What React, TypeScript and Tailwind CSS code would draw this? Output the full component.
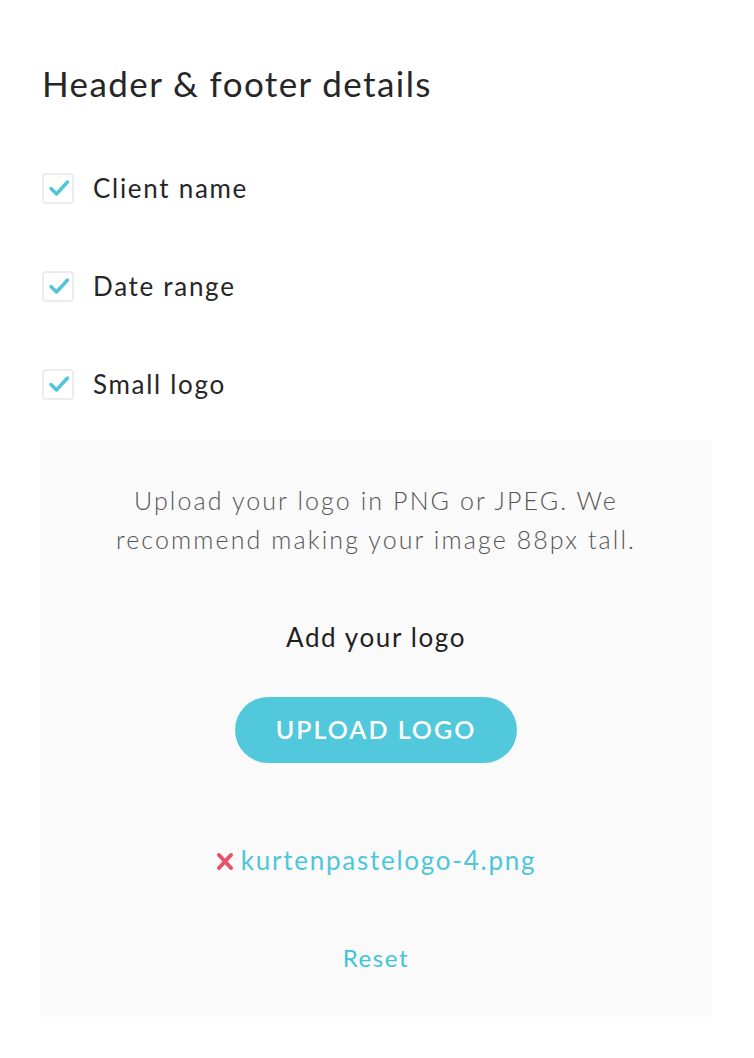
const rows = ["Client name", "Date range", "Small logo"];

function CheckRow({ label }: { label: string }) {
  return (
    <div className="flex items-center h-[32px] gap-[19px]">
      <div className="w-[32px] h-[31px] flex items-center justify-center rounded-[4px] border-2 border-[#ececec] bg-white">
        <svg width="22" height="18" viewBox="0 0 22 18" className="ml-[1px]">
          <path d="M3 9.5 L8.5 15 L19.5 3" fill="none" stroke="#4ec6da" strokeWidth="3.4" strokeLinecap="round" strokeLinejoin="round" />
        </svg>
      </div>
      <span className="text-[26px] tracking-[1.7px] text-[#262626]">{label}</span>
    </div>
  );
}

export default function App() {
  return (
    <div className="min-h-[1058px] bg-white px-[40px] pt-[61px] font-['Lato',sans-serif]">
      <h2 className="text-[35px] leading-[44px] tracking-[1.4px] text-[#262626] pl-[2px]">Header &amp; footer details</h2>

      <div className="mt-[67px] flex flex-col gap-[66px] pl-[2px]">
        {rows.map((r) => (
          <CheckRow key={r} label={r} />
        ))}
      </div>

      <div className="mt-[41px] w-[672px] bg-[#fafafa] flex flex-col items-center pt-[40px] pb-[40px]">
        <p className="text-[25px] font-light leading-[39px] tracking-[2.1px] text-[#555555] text-center">
          Upload your logo in PNG or JPEG. We
          <br />
          recommend making your image 88px tall.
        </p>

        <p className="mt-[59px] text-[26px] leading-[39px] tracking-[1.6px] text-[#1f1f1f]">Add your logo</p>

        <button className="mt-[40px] w-[282px] h-[66px] rounded-full bg-[#52c8dc] text-white text-[25px] font-semibold tracking-[2px]">
          UPLOAD LOGO
        </button>

        <div className="mt-[78px] flex items-center gap-[7px] h-[39px]">
          <svg width="18" height="19" viewBox="0 0 18 19" className="mt-[1px]">
            <path d="M3 3 L15 16 M15 3 L3 16" stroke="#e9506a" strokeWidth="4" strokeLinecap="round" />
          </svg>
          <span className="text-[26px] leading-[39px] tracking-[1.75px] text-[#4ec6da]">kurtenpastelogo-4.png</span>
        </div>

        <a className="mt-[58px] text-[24px] leading-[39px] tracking-[1.6px] text-[#3fc4d9]">Reset</a>
      </div>
    </div>
  );
}
